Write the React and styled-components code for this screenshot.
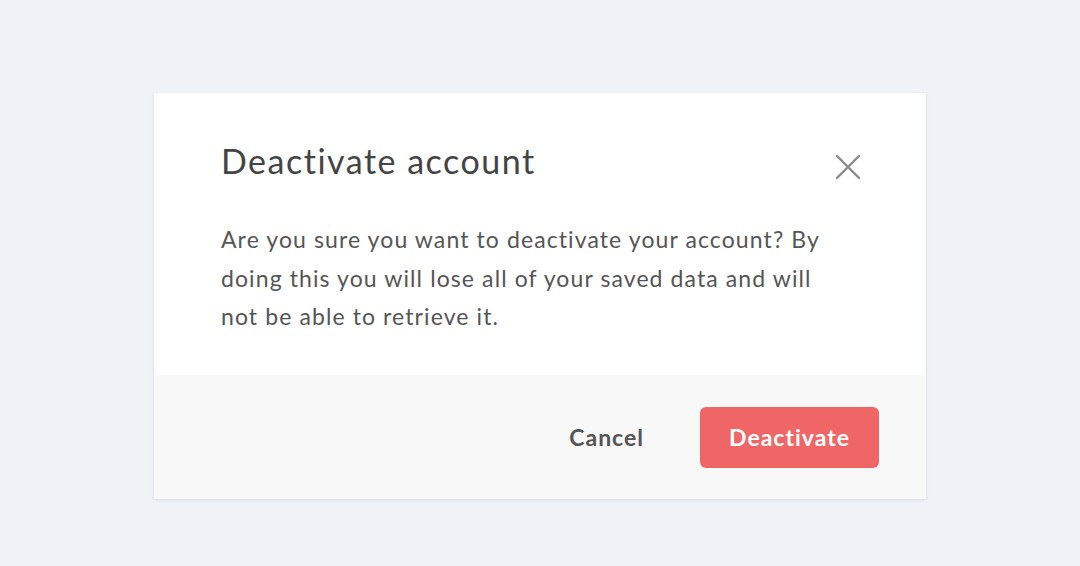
import React from 'react';
import styled, { createGlobalStyle } from 'styled-components';

const GlobalStyle = createGlobalStyle`
  html, body {
    margin: 0;
    padding: 0;
    background: #eff2f7;
    font-family: 'Lato', 'Open Sans', sans-serif;
  }
`;

const Page = styled.div`
  width: 1080px;
  height: 566px;
  display: flex;
  justify-content: center;
  padding-top: 93px;
  box-sizing: border-box;
`;

const Modal = styled.div`
  width: 772px;
  height: 406px;
  background: #ffffff;
  box-shadow: 0 1px 3px rgba(40, 50, 70, 0.12);
  display: flex;
  flex-direction: column;
`;

const Body = styled.div`
  flex: 1;
  padding: 48px 64px 0 67px;
`;

const Header = styled.div`
  display: flex;
  justify-content: space-between;
  align-items: flex-start;
`;

const Title = styled.h2`
  margin: 0;
  font-size: 34px;
  font-weight: 400;
  color: #444444;
  line-height: 40px;
  letter-spacing: 1.5px;
`;

const CloseButton = styled.button`
  border: none;
  background: none;
  padding: 0;
  margin-top: 12px;
  cursor: pointer;
  display: flex;
  color: #8a8a8a;
`;

const Message = styled.p`
  margin: 39px 0 0;
  font-size: 23px;
  line-height: 38.5px;
  color: #555555;
  letter-spacing: 1.1px;
  max-width: 624px;
`;

const Footer = styled.div`
  height: 124px;
  background: #f8f8f8;
  display: flex;
  align-items: center;
  justify-content: flex-end;
  padding: 0 47px 0 0;
  gap: 56px;
`;

const TextButton = styled.button`
  border: none;
  background: none;
  font-family: inherit;
  font-size: 23px;
  font-weight: 700;
  letter-spacing: 1px;
  color: #555555;
  cursor: pointer;
  padding: 0;
`;

const DangerButton = styled.button`
  border: none;
  background: #f06565;
  color: #ffffff;
  font-family: inherit;
  font-size: 23px;
  font-weight: 700;
  letter-spacing: 1px;
  width: 179px;
  height: 61px;
  border-radius: 6px;
  cursor: pointer;
`;

const CloseIcon = () => (
  <svg width="28" height="28" viewBox="0 0 28 28" fill="none">
    <path d="M3 3 L25 25 M25 3 L3 25" stroke="currentColor" strokeWidth="2.4" strokeLinecap="round" />
  </svg>
);

export default function App() {
  return (
    <>
      <GlobalStyle />
      <Page>
        <Modal>
          <Body>
            <Header>
              <Title>Deactivate account</Title>
              <CloseButton aria-label="Close">
                <CloseIcon />
              </CloseButton>
            </Header>
            <Message>
              Are you sure you want to deactivate your account? By doing this you will lose all of your saved data and will not be able to retrieve it.
            </Message>
          </Body>
          <Footer>
            <TextButton>Cancel</TextButton>
            <DangerButton>Deactivate</DangerButton>
          </Footer>
        </Modal>
      </Page>
    </>
  );
}
